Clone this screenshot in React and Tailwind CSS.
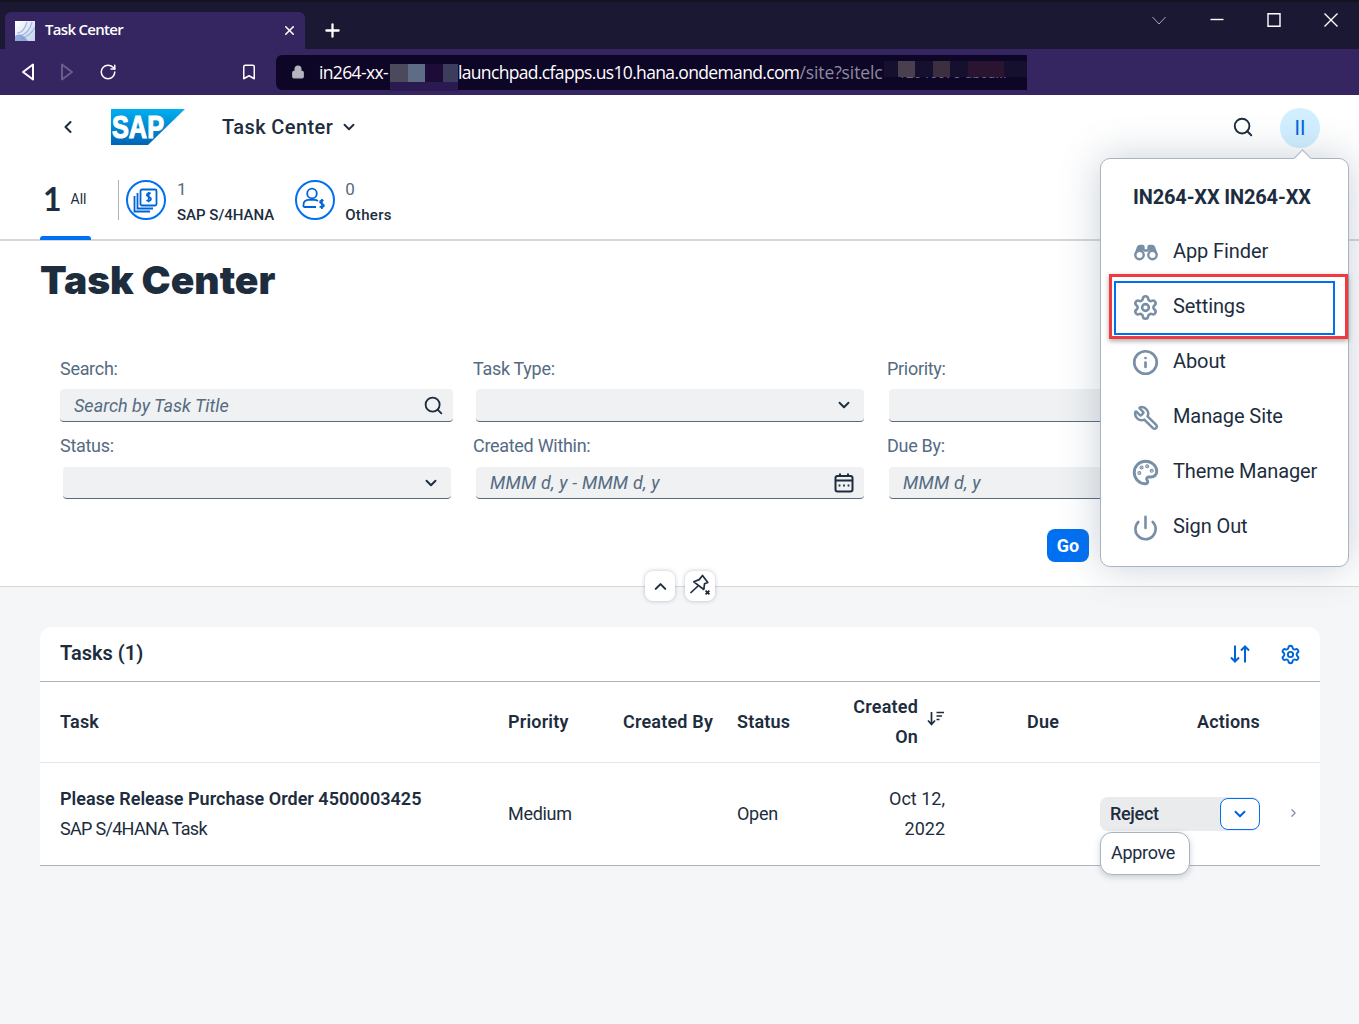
import React from "react";
import { ChevronLeft, ChevronDown, ChevronUp, ChevronRight, Search, Settings, Info, Wrench, Palette, Power, X, Plus, RotateCw, Bookmark, Lock } from "lucide-react";

function Binoculars() {
  return (
    <svg width="26" height="17" viewBox="0 0 26 17" fill="none" stroke="#788fa6" strokeWidth="2.4">
      <circle cx="6.5" cy="11" r="4.2" />
      <circle cx="19.5" cy="11" r="4.2" />
      <path d="M2.2 10 L4.6 3 Q5.2 1.4 7 1.4 L9.6 1.4 Q11 1.4 11 3 L11 7 L15 7 L15 3 Q15 1.4 16.4 1.4 L19 1.4 Q20.8 1.4 21.4 3 L23.8 10 L20 6 L6 6 Z" fill="#788fa6" strokeLinejoin="round" strokeWidth="1.4" />
    </svg>
  );
}

function CoinStackIcon() {
  return (
    <svg width="26" height="26" viewBox="0 0 26 26" fill="none" stroke="#0064d9" strokeWidth="1.8">
      <rect x="7.5" y="2.5" width="16" height="16" rx="1.5" />
      <path d="M4.5 6 V21.5 H20" />
      <path d="M1.5 9 V24.5 H17" />
      <path d="M17.8 6.6 C16.6 5.9 13.6 6 13.8 8.2 C14 10.2 18 9.6 18 12 C18 14.2 14.8 14.2 13.4 13.3 M15.7 5 V15.2" strokeWidth="1.7" />
    </svg>
  );
}

function PersonCoinIcon() {
  return (
    <svg width="26" height="26" viewBox="0 0 26 26" fill="none" stroke="#0064d9" strokeWidth="1.8">
      <circle cx="10" cy="6.5" r="4.8" />
      <path d="M1.5 20 V17.5 C1.5 14.6 4 12.8 7 12.8 H12.5 C14 12.8 15 13.2 16 14 M1.5 20 H14" />
      <path d="M21.5 13.8 C20 13 17.8 13.5 18 15.2 C18.2 17 22 16.6 22 18.6 C22 20.4 19 20.4 17.6 19.6 M19.9 12 V22" strokeWidth="1.7" />
    </svg>
  );
}

function UnpinIcon() {
  return (
    <svg width="24" height="24" viewBox="0 0 24 24" fill="none" stroke="#1d2d3e" strokeWidth="1.7" strokeLinejoin="round">
      <path d="M14.5 1.5 L19.8 8.4 L16.5 9.8 L15.8 15.5 L5.8 7.8 L11.2 5.6 Z" />
      <path d="M10 12 L2.5 19" />
      <path d="M17.6 16.6 L21.4 20.4 M21.4 16.6 L17.6 20.4" strokeWidth="1.8" />
    </svg>
  );
}

function SortDescIcon() {
  return (
    <svg width="18" height="18" viewBox="0 0 18 18" fill="none" stroke="#1d2d3e" strokeWidth="1.7">
      <path d="M4.5 2 V14 M1 10.5 L4.5 14.5 L8 10.5" />
      <path d="M9.5 2.5 H17 M9.5 6 H15 M9.5 9.5 H12.5" />
    </svg>
  );
}

function SortIcon() {
  return (
    <svg width="20" height="18" viewBox="0 0 20 18" fill="none" stroke="#0064d9" strokeWidth="2">
      <path d="M5 0.5 V16.5 M1 12.5 L5 16.5 L9 12.5" />
      <path d="M15 17.5 V1.5 M11 5.5 L15 1.5 L19 5.5" />
    </svg>
  );
}

function CalendarIcon() {
  return (
    <svg width="20" height="20" viewBox="0 0 20 20" fill="none" stroke="#1d2d3e" strokeWidth="2">
      <rect x="1.5" y="3" width="17" height="15.5" rx="2" />
      <path d="M1.5 7.5 H18.5 M6 0.5 V4 M14 0.5 V4" />
      <path d="M4.6 12.5 H6.4 M9.1 12.5 H10.9 M13.6 12.5 H15.4" strokeWidth="2.2" />
    </svg>
  );
}

function SapLogo() {
  return (
    <svg width="74" height="36" viewBox="0 0 74 36">
      <defs>
        <linearGradient id="sapg" x1="0" y1="0" x2="0" y2="1">
          <stop offset="0" stopColor="#00b0f0" />
          <stop offset="1" stopColor="#0064b4" />
        </linearGradient>
      </defs>
      <polygon points="0,0 74,0 37,36 0,36" fill="url(#sapg)" />
      <text x="1" y="29" fill="#ffffff" fontFamily="Liberation Sans" fontWeight="700" fontSize="32" stroke="#ffffff" strokeWidth="1.2" textLength="52" lengthAdjust="spacingAndGlyphs">SAP</text>
    </svg>
  );
}

function Favicon() {
  return (
    <svg width="20" height="20" viewBox="0 0 20 20" className="shrink-0">
      <defs>
        <linearGradient id="fav" x1="0" y1="0" x2="1" y2="1">
          <stop offset="0" stopColor="#ffffff" />
          <stop offset="1" stopColor="#c4d2ee" />
        </linearGradient>
      </defs>
      <rect width="20" height="20" fill="url(#fav)" />
      <path d="M4 15 C9 14 15 10 17 1 M6 18 C11 16 17 13 20 6 M2 12 C6 12 10 8 12 1" stroke="#a3b8e0" strokeWidth="1.2" fill="none" />
      <path d="M0 15 C5 12 9 14 13 20 H0 Z" fill="#6f8fd0" opacity="0.7" />
    </svg>
  );
}

function ChromeArrow({ flip, color }) {
  return (
    <svg width="14" height="18" viewBox="0 0 14 18" fill="none" stroke={color} strokeWidth="2" strokeLinejoin="round" className={flip ? "rotate-180" : ""}>
      <path d="M12 1.5 V16.5 L2 9 Z" />
    </svg>
  );
}

function WinIcon({ d, color = "#ffffff", width = 1.4 }) {
  return (
    <svg width="14" height="14" viewBox="0 0 14 14" fill="none" stroke={color} strokeWidth={width}>
      <path d={d} />
    </svg>
  );
}

function Field({ children, className, icon }) {
  return (
    <div className={"flex items-center justify-between bg-[#eff1f2] rounded-[4px] border-b border-[#556b81] pl-[14px] " + className}>
      <span className="text-[18px] italic text-[#556b82] tracking-[0px]">{children}</span>
      {icon}
    </div>
  );
}

function MenuRow({ icon, label }) {
  return (
    <div className="relative flex items-center h-[55px] pl-[31px] gap-[14px]">
      <span className="w-[27px] mt-[4px] flex justify-center text-[#788fa6] shrink-0">{icon}</span>
      <span className="text-[20px] tracking-[-0.1px] text-[#1d2d3e]">{label}</span>
    </div>
  );
}

export default function App() {
  return (
    <div className="relative w-full h-[1024px] overflow-hidden bg-[#f5f6f7] font-['Roboto',sans-serif] text-[#1d2d3e]">
      {/* tab strip */}
      <div className="h-[49px] bg-[#1a1833] border-t-2 border-[#131220] flex items-end pl-[5px] text-white">
        <div className="w-[300px] h-[37px] bg-[#352560] rounded-t-[6px] flex items-center pl-[10px] pr-[8px]">
          <Favicon />
          <span className="ml-[10px] mb-[2px] text-[15px] font-semibold flex-1 font-['Open_Sans',sans-serif] tracking-[-0.7px]">Task Center</span>
          <X size={15} strokeWidth={2.5} />
        </div>
        <div className="w-[54px] h-[37px] flex items-center justify-center">
          <Plus size={21} strokeWidth={2.6} />
        </div>
        <div className="flex-1 h-full flex items-start justify-end pt-[11px]">
          <div className="w-[58px] flex justify-center"><WinIcon d="M0.5 4 L7 11 L13.5 4" color="#a9a9b8" width={1} /></div>
          <div className="w-[57px] flex justify-center"><WinIcon d="M0.5 6.5 H13.5" /></div>
          <div className="w-[57px] flex justify-center"><WinIcon d="M1 0.7 H13 V13.3 H1 Z" /></div>
          <div className="w-[57px] flex justify-center"><WinIcon d="M0.5 0.5 L13.5 13.5 M13.5 0.5 L0.5 13.5" /></div>
        </div>
      </div>
      {/* toolbar */}
      <div className="h-[46px] bg-[#352560] flex items-center relative">
        <div className="w-[53px] flex justify-end pr-[18px]"><ChromeArrow color="#ffffff" /></div>
        <div className="w-[28px] flex justify-center"><ChromeArrow flip color="#6a5d8c" /></div>
        <div className="w-[54px] flex justify-center text-white"><RotateCw size={18} strokeWidth={2} /></div>
        <div className="ml-[104px] w-[20px] flex justify-center text-white"><Bookmark size={18} strokeWidth={2} /></div>
        <div className="ml-[17px] w-[751px] h-[35px] bg-[#0e0627] rounded-l-[6px] flex items-center pl-[15px] overflow-hidden relative">
          <Lock size={14} className="text-[#b5b5c0] fill-[#b5b5c0] shrink-0" />
          <span className="ml-[14px] text-[17.5px] text-white whitespace-nowrap font-['Open_Sans',sans-serif] tracking-[-0.65px]">
            in264-xx-<span className="inline-block w-[70px]"></span>launchpad.cfapps.us10.hana.ondemand.com<span className="text-[#8d8a9c] tracking-[-0.1px]">/site?sitelc</span>
          </span>
          <span className="absolute left-[622px] top-[10px] text-[14px] leading-[16px] text-[#6a6580] whitespace-nowrap">12345678-abcd...</span>
          <span className="absolute left-[608px] top-[6px] w-[143px] h-[16px] bg-[#14102e] flex">
            <span className="ml-[14px] w-[17px] bg-[#4a3f4c]"></span>
            <span className="ml-[18px] w-[17px] bg-[#3c3040]"></span>
            <span className="ml-[18px] w-[36px] bg-[#2a1430]"></span>
          </span>
        </div>
        {/* redaction */}
        <div className="absolute left-[390px] top-[15px] w-[68px] h-[27px] bg-[#2a1a50]">
          <div className="flex h-[18px]">
            <span className="w-[18px] bg-[#4a4a5c]"></span>
            <span className="w-[17px] bg-[#5e6d85]"></span>
            <span className="w-[18px] bg-[#1e0c38]"></span>
            <span className="w-[15px] bg-[#3c3d5c]"></span>
          </div>
        </div>
      </div>
      {/* shell header */}
      <div className="h-[63px] bg-white flex items-center">
        <div className="ml-[58px] w-[20px] flex justify-center"><ChevronLeft size={20} strokeWidth={2.5} /></div>
        <div className="ml-[33px]"><SapLogo /></div>
        <span className="ml-[37px] text-[20px] font-medium tracking-[0.4px]">Task Center</span>
        <ChevronDown size={18} strokeWidth={2.5} className="ml-[7px]" />
        <div className="flex-1"></div>
        <Search size={22} strokeWidth={2.1} className="mr-[26px]" />
        <div className="w-[40px] h-[40px] mr-[39px] mt-[2px] rounded-full bg-[#d1efff] flex items-center justify-center text-[#0064d9] text-[20px]">II</div>
      </div>
      {/* tabs */}
      <div className="h-[83px] bg-white border-b-[2px] border-[#d5d7da] flex items-start pl-[40px] pt-[22px] relative">
        <div className="w-[51px] h-[60px] flex flex-col justify-between">
          <div className="flex items-start pl-[3px]">
            <span className="text-[32px] font-bold leading-[38px] font-['Lato',sans-serif]">1</span>
            <span className="ml-[9px] text-[14px] leading-[38px] text-[#1d2d3e]">All</span>
          </div>
          <div className="h-[4px] rounded-t-[3px] bg-[#0070f2]"></div>
        </div>
        <div className="ml-[27px] w-px h-[40px] bg-[#a9b4be]"></div>
        <div className="ml-[7px] w-[40px] h-[40px] rounded-full border-2 border-[#0070f2] flex items-center justify-center"><CoinStackIcon /></div>
        <div className="ml-[11px] flex flex-col -mt-[1px]">
          <span className="text-[17px] leading-[20px] text-[#556b82]">1</span>
          <span className="text-[15px] font-medium leading-[32px]">SAP S/4HANA</span>
        </div>
        <div className="ml-[21px] w-[40px] h-[40px] rounded-full border-2 border-[#0070f2] flex items-center justify-center"><PersonCoinIcon /></div>
        <div className="ml-[10px] flex flex-col -mt-[1px]">
          <span className="text-[17px] leading-[20px] text-[#556b82]">0</span>
          <span className="text-[15px] font-medium leading-[32px] tracking-[0.3px]">Others</span>
        </div>
      </div>
      {/* filter panel */}
      <div className="relative h-[346px] bg-white border-b border-[#d5d7da] px-[40px]">
        <h1 className="pt-[15px] text-[39px] leading-[48px] font-black font-['Inter',sans-serif] tracking-[0px]">Task Center</h1>
        <div className="mt-[55px] pl-[20px] grid grid-cols-[413px_414px_390px] text-[18px] text-[#556b82] tracking-[-0.3px]">
          <div className="h-[30px] leading-[20px]">Search:</div>
          <div className="h-[30px] leading-[20px]">Task Type:</div>
          <div className="h-[30px] leading-[20px]">Priority:</div>
          <Field className="w-[393px] h-[33px] pr-[9px]" icon={<Search size={21} strokeWidth={2.1} className="text-[#1d2d3e]" />}>Search by Task Title</Field>
          <Field className="ml-[3px] w-[388px] h-[33px] pr-[11px]" icon={<ChevronDown size={18} strokeWidth={2.5} className="text-[#1d2d3e]" />}></Field>
          <Field className="ml-[2px] w-[388px] h-[33px]"></Field>
          <div className="h-[45px] pt-[14px] leading-[20px]">Status:</div>
          <div className="h-[45px] pt-[14px] leading-[20px]">Created Within:</div>
          <div className="h-[45px] pt-[14px] leading-[20px]">Due By:</div>
          <Field className="ml-[3px] w-[388px] h-[32px] pr-[11px]" icon={<ChevronDown size={18} strokeWidth={2.5} className="text-[#1d2d3e]" />}></Field>
          <Field className="ml-[3px] w-[388px] h-[32px] pr-[10px]" icon={<CalendarIcon />}><span className="tracking-[0.2px]">MMM d, y - MMM d, y</span></Field>
          <Field className="ml-[2px] w-[388px] h-[32px]"><span className="tracking-[0.2px]">MMM d, y</span></Field>
        </div>
        <div className="mt-[30px] ml-[1007px] w-[42px] h-[33px] rounded-[8px] bg-[#0070f2] text-white text-[18px] font-bold flex items-center justify-center">Go</div>
        <div className="absolute left-[645px] -bottom-[15px] flex gap-[10px]">
          <div className="w-[30px] h-[30px] bg-white rounded-[8px] shadow-[0_0_4px_rgba(85,107,130,0.4)] flex items-center justify-center"><ChevronUp size={19} strokeWidth={2.6} /></div>
          <div className="w-[30px] h-[30px] bg-white rounded-[8px] shadow-[0_0_4px_rgba(85,107,130,0.4)] flex items-center justify-center"><UnpinIcon /></div>
        </div>
      </div>
      {/* tasks card */}
      <div className="ml-[40px] mt-[40px] w-[1280px] bg-white rounded-t-[12px]">
        <div className="h-[55px] border-b border-[#a9b4be] flex items-center pl-[20px] pr-[19px]">
          <span className="text-[20px] font-semibold flex-1 pb-[2px]">Tasks (1)</span>
          <SortIcon />
          <Settings size={21} strokeWidth={2.2} className="ml-[30px] text-[#0064d9]" />
        </div>
        <div className="h-[81px] border-b border-[#e5e5e5] grid grid-cols-[448px_115px_114px_96px_112px_155px_160px_80px] items-center pl-[20px] pb-[2px] text-[18px] font-semibold tracking-[0.2px]">
          <span>Task</span>
          <span>Priority</span>
          <span>Created By</span>
          <span>Status</span>
          <div className="flex items-center justify-end">
            <span className="text-right leading-[30px] pt-[1px]">Created<br />On</span>
            <span className="ml-[9px] -mt-[4px]"><SortDescIcon /></span>
          </div>
          <span className="pl-[82px]">Due</span>
          <span className="text-right">Actions</span>
          <span></span>
        </div>
        <div className="h-[103px] border-b border-[#a9b4be] grid grid-cols-[448px_115px_114px_96px_112px_155px_160px_40px] items-center pl-[20px] pb-[2px] text-[18px] tracking-[-0.3px]">
          <div className="leading-[30px] pt-[2px]">
            <div className="font-semibold tracking-[0.03px]">Please Release Purchase Order 4500003425</div>
            <div className="tracking-[-0.7px]">SAP S/4HANA Task</div>
          </div>
          <span>Medium</span>
          <span></span>
          <span>Open</span>
          <span className="text-right leading-[30px] pt-[2px] tracking-[0px]">Oct 12,<br />2022</span>
          <span></span>
          <div className="relative h-[34px] mt-[2px] bg-[#e9ebed] rounded-[8px] flex items-center pl-[10px]">
            <span className="font-medium flex-1 pb-[2px]">Reject</span>
            <div className="w-[40px] h-[32px] bg-white border border-[#0070f2] rounded-[8px] flex items-center justify-center text-[#0064d9]">
              <ChevronDown size={18} strokeWidth={2.6} />
            </div>
            <div className="absolute left-0 top-[35px] w-[90px] h-[43px] bg-white rounded-[12px] border border-[#a9b4be] shadow-[0_2px_6px_rgba(85,107,130,0.3)] flex items-center pl-[10px] pb-[2px]">Approve</div>
          </div>
          <div className="flex justify-start pl-[27px] text-[#7c8ea0]"><ChevronRight size={18} strokeWidth={2.2} /></div>
        </div>
      </div>
      {/* popover */}
      <div className="absolute left-[1100px] top-[158px] w-[249px] h-[409px] bg-white rounded-[10px] border border-[#a9b4be] shadow-[0_0_40px_rgba(85,107,130,0.32)]">
        <div className="absolute left-[195px] -top-[7px] w-[13px] h-[13px] bg-white rotate-45 border-l border-t border-[#a9b4be]"></div>
        <div className="h-[64px] pt-[12px] pl-[32px] flex items-center text-[20px] font-bold tracking-[-0.15px]">IN264-XX IN264-XX</div>
        <MenuRow icon={<Binoculars />} label="App Finder" />
        <MenuRow icon={<Settings size={27} strokeWidth={2.3} />} label="Settings" />
        <MenuRow icon={<Info size={27} strokeWidth={2.4} />} label="About" />
        <MenuRow icon={<Wrench size={26} strokeWidth={2.3} className="-scale-x-100" />} label="Manage Site" />
        <MenuRow icon={<Palette size={27} strokeWidth={2.6} />} label="Theme Manager" />
        <MenuRow icon={<Power size={28} strokeWidth={2.3} />} label="Sign Out" />
        <div className="absolute left-[8px] top-[115px] w-[239px] h-[65px] border-[3px] border-[#f03a3f] shadow-[0_2px_5px_rgba(0,0,0,0.35)] pointer-events-none"></div>
        <div className="absolute left-[13px] top-[122px] w-[221px] h-[54px] border-2 border-[#0070f2] pointer-events-none"></div>
      </div>
    </div>
  );
}
